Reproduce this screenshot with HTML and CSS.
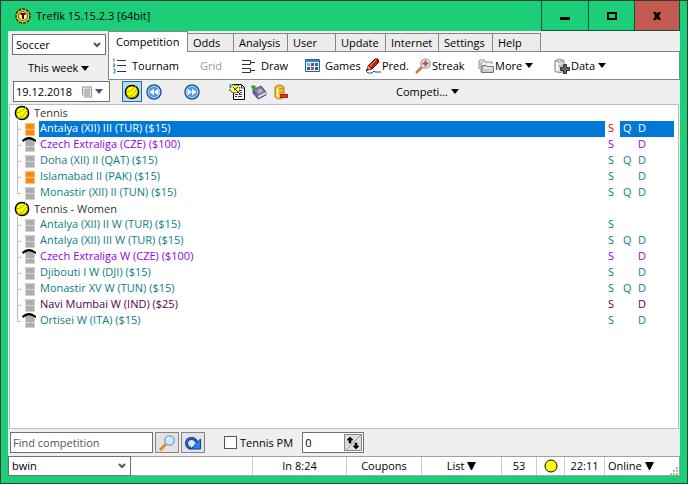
FILE: index.html
```html
<!DOCTYPE html>
<html lang="en">
<head>
<meta charset="utf-8">
<title>Trefík 15.15.2.3 [64bit]</title>
<link rel="stylesheet" href="styles.css">
</head>
<body>
<svg class="sprite" aria-hidden="true">
  <symbol id="ball" viewBox="0 0 16 16"><circle cx="8" cy="8" r="6.600" fill="#ff0" stroke="#000" stroke-width="1.500"/><path d="M2 8Q6 8 8 6T12 2M3 12Q8 13 10 9T14 6" fill="none" stroke="#b5ad00" stroke-width="1"/><path d="M4 13.500Q12 14.500 13.800 8" fill="none" stroke="#8a8200" stroke-width="1"/></symbol>
  <symbol id="court" viewBox="0 0 14 16"><path d="M3 2h10v13H3z" fill="currentColor"/><path d="M3.500 2.500h9v12h-9zM3 8.500h10" fill="none" stroke="#fff" stroke-opacity=".45"/></symbol>
  <symbol id="hall" viewBox="0 0 14 16"><path d="M3 3h10v12H3z" fill="currentColor"/><path d="M3.500 4v10.500h9V4M3 9.500h10" fill="none" stroke="#fff" stroke-opacity=".45"/><path d="M0 3L3 1Q7-1 11 1L14 3V5L10 3Q7 2 4 3L1 5Z" fill="#000"/></symbol>
  <symbol id="down" viewBox="0 0 8 5"><path d="M0 0h8L4 5z" fill="currentColor"/></symbol>
  <symbol id="bigdown" viewBox="0 0 9 8"><path d="M0 0h9L5 8H4z" fill="currentColor"/></symbol>
  <symbol id="chevron" viewBox="0 0 8 6"><path d="M1 1l3 3 3-3" fill="none" stroke="#555" stroke-width="2"/></symbol>
</svg>

<div class="window">
  <header class="titlebar">
    <svg class="icon" viewBox="0 0 16 16"><circle cx="8" cy="8" r="7" fill="#f7ca24" stroke="#332800" stroke-width="1.500" stroke-dasharray="3 1"/><circle cx="8" cy="8" r="4.500" fill="#fff4a8" stroke="#665000"/><path d="M5.500 5h5v2H9v4H7V7H5.500z" fill="#111"/></svg>
    <h1>Trefík 15.15.2.3 [64bit]</h1>
    <div class="caption">
      <button type="button" aria-label="Minimize"><svg class="glyph" viewBox="0 0 10 10"><path d="M0 6h10v3H0z"/></svg></button>
      <button type="button" aria-label="Maximize"><svg class="glyph" viewBox="0 0 10 10"><path d="M1 2h8v6H1z" fill="none" stroke="#000" stroke-width="2"/></svg></button>
      <button type="button" class="close" aria-label="Close"><svg class="glyph" viewBox="0 0 10 10"><path d="M1 1h3l1 2 1-2h3L7 5l2 4H6L5 7 4 9H1l2-4z"/></svg></button>
    </div>
  </header>

  <main class="client">
    <div class="top">
      <div class="filters">
        <div class="combo"><select aria-label="Sport"><option>Soccer</option></select><svg class="chev"><use href="#chevron"/></svg></div>
        <button type="button" class="plain week">This week <svg class="arrow"><use href="#down"/></svg></button>
      </div>
      <div class="ribbon">
        <nav class="tabs">
          <button type="button" class="active">Competition</button>
          <button type="button">Odds</button>
          <button type="button">Analysis</button>
          <button type="button">User</button>
          <button type="button">Update</button>
          <button type="button">Internet</button>
          <button type="button">Settings</button>
          <button type="button">Help</button>
        </nav>
        <div class="actions">
          <button type="button" class="plain wide"><svg class="icon" viewBox="0 0 16 16"><path d="M5 2.500h9M5 7.500h9M5 13.500h9" stroke="#333"/><path d="M1 1h1v3M1 6h2v1L1 8.500h2M1 11h2v1.500H2h1V15H1" fill="none" stroke="#3b83c0"/></svg>Tournam</button>
          <button type="button" class="plain" disabled>Grid</button>
          <button type="button" class="plain wide"><svg class="icon" viewBox="0 0 16 16"><path d="M1 2.500h8.500v4H1M1 10.500h8.500v4H1M9 4.500h5M9 12.500h5" fill="none" stroke="#333"/></svg>Draw</button>
          <button type="button" class="plain wide"><svg class="icon" viewBox="0 0 16 16"><path d="M.5 1.500h14v12H.5z" fill="#f4faff" stroke="#2861a5"/><path d="M1 2h13v2H1z" fill="#3b83d4"/><path d="M2 5h3v3H2zM6 9h3v3H6z" fill="#88a5cc"/><path d="M6 5h3v3H6zM2 9h3v3H2z" fill="#2564b8"/><path d="M10 5h3v3h-3z" fill="#0a9b28"/><path d="M10 9h3v3h-3z" fill="#2d57a0"/><path d="M6 9h3v3H6z" fill="#d44b26"/></svg>Games</button>
          <button type="button" class="plain"><svg class="icon" viewBox="0 0 16 16"><path d="M1 11l1 1-1 1 2 2h4l2-2 1 1h6" fill="none" stroke="#2349a0"/><path d="M2 12L3 8 10 1l3 0 1 3-7 7z" fill="#c62213" stroke="#5a1006"/><path d="M5 8l6-6" stroke="#f79b75"/><path d="M2 12l1-4 3 3z" fill="#e8b070"/><path d="M1.500 12.500l1-2 1.500 1.500z"/></svg>Pred.</button>
          <button type="button" class="plain"><svg class="icon" viewBox="0 0 16 16"><path d="M1 15l6-6" stroke="#c8793a" stroke-width="2.500"/><circle cx="10.500" cy="5.500" r="4.700" fill="#d8efff" stroke="#8fa9c4" stroke-width="1.300"/><path d="M10.500 2.500v6M7.500 5.500h6" stroke="#ef3b17" stroke-width="2"/></svg>Streak</button>
          <button type="button" class="plain"><svg class="icon" viewBox="0 0 16 16"><path d="M1 11V3l1-1h4l1 2h7v2M3 14V6l1-2" fill="#eee" stroke="#888"/><path d="M4.500 7.500h4l1 1h6v6H3.500z" fill="#ccc" stroke="#777"/><path d="M5 10h10" stroke="#fff"/></svg>More <svg class="arrow"><use href="#down"/></svg></button>
          <button type="button" class="plain"><svg class="icon" viewBox="0 0 16 16"><path d="M1 2.500Q5.500-.5 10 2.500v11Q5.500 16 1 13.500z" fill="#ddd" stroke="#888"/><path d="M1 7q4.500 2.500 9 0M1 3q4.500 2 9 0" fill="none" stroke="#999"/><path d="M3 4v9" stroke="#fff" stroke-width="2"/><path d="M9.500 6.500h3v3h3v3h-3v3h-3v-3h-3v-3h3z" fill="#666" stroke="#333"/></svg>Data <svg class="arrow"><use href="#down"/></svg></button>
        </div>
      </div>
    </div>

    <div class="toolbar">
      <div class="date">
        <input type="text" value="19.12.2018" aria-label="Date">
        <button type="button" class="plain" aria-label="Open calendar"><svg class="cal" viewBox="0 0 12 12"><path d="M1 .5h9.500v11H3L.5 9V.5z" fill="#eee" stroke="#8d8589"/><path d="M2 3.500h7M2 5.500h7M2 7.500h7M2 9.500h7M3.500 2v8M5.500 2v8M7.500 2v8" stroke="#aaa"/></svg><svg class="arrow small"><use href="#down"/></svg></button>
      </div>
      <div class="tools">
        <button type="button" class="tool on" aria-label="Tennis"><svg class="icon"><use href="#ball"/></svg></button>
        <button type="button" class="tool" aria-label="Previous"><svg class="icon" viewBox="0 0 16 16"><circle cx="8" cy="8" r="7" fill="#4a9bea" stroke="#17579f" stroke-width="1.500"/><circle cx="8" cy="8" r="5.800" fill="none" stroke="#b8dcfa"/><path d="M8 4.500v7L3.500 8zM12.500 4.500v7L8 8z" fill="#fff"/></svg></button>
        <button type="button" class="tool" aria-label="Next"><svg class="icon" viewBox="0 0 16 16"><circle cx="8" cy="8" r="7" fill="#4a9bea" stroke="#17579f" stroke-width="1.500"/><circle cx="8" cy="8" r="5.800" fill="none" stroke="#b8dcfa"/><path d="M8 4.500v7L12.500 8zM3.500 4.500v7L8 8z" fill="#fff"/></svg></button>
        <button type="button" class="tool" aria-label="Notes"><svg class="icon" viewBox="0 0 16 16"><path d="M4.500.5h8l3 3v12h-11z" fill="#fff" stroke="#000"/><path d="M12.500 1v3h3M6 10.500h3m1 0h3M6 12.500h2m1 0h4M11 6.500h2M11 8.500h2" fill="none" stroke="#333"/><path d="M0 0h4v3H0z" fill="#2be0e8"/><path d="M1 4l2-3h6l2 3-1 4-5 1-4-2z" fill="#ff6" stroke="#333" stroke-dasharray="2 1"/><path d="M4 3l7 7M5 6l4-3" stroke="#333"/></svg></button>
        <button type="button" class="tool" aria-label="Book"><svg class="icon" viewBox="0 0 16 16"><path d="M2 6l8-4 5 6v3l-8 4-5-6z" fill="#625f9f" stroke="#50507c"/><path d="M7 12l8-4v2l-8 4z" fill="#e8e8f2"/><path d="M3 6l7-3 4 5-7 3z" fill="#8583c2"/><path d="M9 5v4M7 7h4" stroke="#eddc59"/><path d="M0 2l3-1 1 1 2 1-2 1-1 2-2-1z" fill="#3d9b35"/></svg></button>
        <button type="button" class="tool" aria-label="Remove data"><svg class="icon" viewBox="0 0 16 16"><path d="M2 3Q6.500-1 11 3v10q-4.500 4-9 0z" fill="#f1c32c" stroke="#b77a12"/><path d="M2 8q4.500 2 9 0M2 4q4.500 2 9 0" fill="none" stroke="#c38c18"/><path d="M4.500 4v9" stroke="#fff29b" stroke-width="2"/><path d="M7.500 10.500h7v3h-7z" fill="#f32d1c" stroke="#a51b10"/></svg></button>
        <button type="button" class="plain">Competi… <svg class="arrow"><use href="#down"/></svg></button>
      </div>
    </div>

    <section class="tree" aria-label="Competitions">
      <h2><svg class="icon"><use href="#ball"/></svg>Tennis</h2>
      <ul>
        <li class="orange selected"><svg class="court"><use href="#court"/></svg><span class="name">Antalya (XII) III (TUR) ($15)</span><span class="flag s">S</span><span class="flag">Q</span><span class="flag">D</span></li>
        <li class="purple"><svg class="court"><use href="#hall"/></svg><span class="name">Czech Extraliga (CZE) ($100)</span><span class="flag s">S</span><span class="flag"></span><span class="flag">D</span></li>
        <li><svg class="court"><use href="#court"/></svg><span class="name">Doha (XII) II (QAT) ($15)</span><span class="flag s">S</span><span class="flag">Q</span><span class="flag">D</span></li>
        <li class="orange"><svg class="court"><use href="#court"/></svg><span class="name">Islamabad II (PAK) ($15)</span><span class="flag s">S</span><span class="flag"></span><span class="flag">D</span></li>
        <li><svg class="court"><use href="#court"/></svg><span class="name">Monastir (XII) II (TUN) ($15)</span><span class="flag s">S</span><span class="flag">Q</span><span class="flag">D</span></li>
      </ul>
      <h2><svg class="icon"><use href="#ball"/></svg>Tennis - Women</h2>
      <ul>
        <li><svg class="court"><use href="#court"/></svg><span class="name">Antalya (XII) II W (TUR) ($15)</span><span class="flag s">S</span><span class="flag"></span><span class="flag"></span></li>
        <li><svg class="court"><use href="#court"/></svg><span class="name">Antalya (XII) III W (TUR) ($15)</span><span class="flag s">S</span><span class="flag">Q</span><span class="flag">D</span></li>
        <li class="purple"><svg class="court"><use href="#hall"/></svg><span class="name">Czech Extraliga W (CZE) ($100)</span><span class="flag s">S</span><span class="flag"></span><span class="flag">D</span></li>
        <li><svg class="court"><use href="#court"/></svg><span class="name">Djibouti I W (DJI) ($15)</span><span class="flag s">S</span><span class="flag"></span><span class="flag">D</span></li>
        <li><svg class="court"><use href="#court"/></svg><span class="name">Monastir XV W (TUN) ($15)</span><span class="flag s">S</span><span class="flag">Q</span><span class="flag">D</span></li>
        <li class="plum"><svg class="court"><use href="#court"/></svg><span class="name">Navi Mumbai W (IND) ($25)</span><span class="flag s">S</span><span class="flag"></span><span class="flag">D</span></li>
        <li><svg class="court"><use href="#hall"/></svg><span class="name">Ortisei W (ITA) ($15)</span><span class="flag s">S</span><span class="flag"></span><span class="flag">D</span></li>
      </ul>
    </section>

    <div class="search">
      <input type="text" class="find" placeholder="Find competition" aria-label="Find competition">
      <button type="button" class="push" aria-label="Search"><svg class="icon" viewBox="0 0 16 16"><path d="M1 15l6-6" stroke="#d98a2b" stroke-width="3"/><circle cx="10.500" cy="5.500" r="4.700" fill="#c4ecff" stroke="#8aa3bd" stroke-width="1.500"/><path d="M8 5q0-2 2-2.500" fill="none" stroke="#fff" stroke-width="1.500"/></svg></button>
      <button type="button" class="push" aria-label="Refresh"><svg class="icon" viewBox="0 0 16 16"><path d="M6 13.500Q1.500 12 1.500 8Q2 3.500 6.500 3.500Q10.500 3.500 12 8" fill="none" stroke="#0b409c" stroke-width="3"/><path d="M15.500 4v10H6z" fill="#2f7de0" stroke="#0b409c"/><path d="M5.500 13Q1.500 12 1.500 8Q2 3.500 6.500 3.500Q10.500 3.500 12 9" fill="none" stroke="#2f7de0"/></svg></button>
      <label class="check"><input type="checkbox">Tennis PM</label>
      <div class="spin"><input type="text" value="0" aria-label="Count"><button type="button" aria-label="Change count"><svg class="icon" viewBox="0 0 16 16"><path d="M0 16L16 0" stroke="#999"/><path d="M5 2L2 5h2v3h2V5h2zM11 14l3-3h-2V8h-2v3H8z" stroke="#000" stroke-width=".7"/></svg></button></div>
    </div>

    <footer class="status">
      <div class="combo"><select aria-label="Bookmaker"><option>bwin</option></select><svg class="chev"><use href="#chevron"/></svg></div>
      <span></span>
      <span>In 8:24</span>
      <span>Coupons</span>
      <button type="button" class="plain">List <svg class="arrow tall"><use href="#bigdown"/></svg></button>
      <span>53</span>
      <span><svg class="dot" viewBox="0 0 14 14"><circle cx="7" cy="7" r="6" fill="#ff0" stroke="#000"/></svg></span>
      <span>22:11</span>
      <button type="button" class="plain online">Online <svg class="arrow tall"><use href="#bigdown"/></svg></button>
      <svg class="grip" viewBox="0 0 8 8"><path d="M6 0h2v2H6zM6 3h2v2H6zM6 6h2v2H6zM3 3h2v2H3zM3 6h2v2H3zM0 6h2v2H0z" fill="#bbb"/></svg>
    </footer>
  </main>
</div>
</body>
</html>
```
FILE: styles.css
```css
* { box-sizing: border-box; }

body {
  margin: 0;
  font: 11px/16px "Open Sans", "Noto Sans", sans-serif;
  color: #000;
}

button, input, select {
  font: inherit;
  color: inherit;
  margin: 0;
  padding: 0;
  border: 0;
  border-radius: 0;
  background: none;
  min-width: 0;
}

svg { flex: none; display: block; }
.sprite { position: absolute; width: 0; height: 0; }
.icon { width: 16px; height: 16px; }
.arrow { width: 8px; height: 5px; }
.arrow.small { color: #3d5a7d; }
.arrow.tall { width: 9px; height: 8px; }

.window {
  height: 100vh;
  display: flex;
  flex-direction: column;
  background: #1bce77;
  border: 1px solid #303b35;
  padding: 0 7px 7px;
}

.titlebar {
  flex: none;
  height: 30px;
  display: flex;
  align-items: center;
  gap: 5px;
  padding-left: 7px;
}
.titlebar h1 { flex: 1; margin: 0; font-size: 11px; font-weight: 400; }
.caption {
  align-self: stretch;
  display: grid;
  grid-template-columns: 47px 46px 46px;
}
.caption button {
  display: grid;
  place-items: center;
  border-left: 1px solid #17503a;
  border-bottom: 1px solid #17503a;
}
.caption .close { background: #c4594f; border-right: 1px solid #17503a; }
.glyph { width: 10px; height: 10px; }

.client {
  flex: 1;
  min-height: 0;
  display: flex;
  flex-direction: column;
  background: #efefef;
}

.plain { display: flex; align-items: center; gap: 3px; white-space: nowrap; }
.plain:disabled { color: #999; }

.combo { display: grid; align-items: center; background: #fff; border: 1px solid #707070; }
.combo select { grid-area: 1 / 1; width: 100%; height: 100%; appearance: none; padding-left: 3px; }
.combo .chev { grid-area: 1 / 1; justify-self: end; width: 8px; height: 6px; margin-right: 4px; pointer-events: none; }

.top { flex: none; display: grid; grid-template-columns: 100px 1fr; }
.filters { padding: 3px 2px 0 4px; }
.filters .combo { height: 21px; }
.week { margin: 5px 0 0 16px; }

.tabs {
  display: grid;
  grid-template-columns: 80px 46px 54px 48px 50px 53px 54px 48px;
  align-items: end;
  height: 21px;
}
.tabs button {
  height: 19px;
  padding-left: 5px;
  text-align: left;
  white-space: nowrap;
  border: 1px solid #85858f;
  border-width: 1px 1px 1px 0;
  background: #ececec;
}
.tabs .active {
  height: 21px;
  padding-left: 7px;
  border-width: 1px 1px 0;
  background: #fff;
  z-index: 1;
}
.actions {
  display: grid;
  grid-template-columns: 88px 41px 64px 60px 50px 63px 76px 1fr;
  height: 29px;
  margin-top: -1px;
  padding-left: 3px;
  background: #fff;
  border: 1px solid #85858f;
}
.actions .plain { gap: 1px; }
.actions .arrow { margin-left: 2px; }
.actions .wide { gap: 4px; }

.toolbar { flex: none; display: flex; height: 24px; padding: 1px 0 2px 5px; gap: 12px; }
.date { display: flex; width: 97px; background: #fff; border: 1px solid #707070; }
.date input { flex: 1; padding-left: 2px; }
.date .plain { padding-right: 6px; gap: 2px; }
.cal { width: 11px; height: 12px; }
.tools { display: grid; grid-template-columns: 22px 38px 45px 22px 22px 125px auto; }
.tool { justify-self: start; width: 20px; display: grid; place-items: center; border: 1px solid transparent; }
.tool.on { background: #bcdcf4; border-color: #1d6dab; }

.tree {
  flex: 1;
  min-height: 0;
  overflow: hidden;
  margin: 0 1px;
  background: #fff;
  border: 1px solid #bcbcbc;
  color: #333;
}
.tree h2 {
  display: flex;
  align-items: center;
  gap: 4px;
  height: 16px;
  margin: 0;
  padding-left: 4px;
  font-size: 11px;
  font-weight: 400;
}
.tree ul {
  list-style: none;
  margin: 0 4px 0 7px;
  padding: 0;
  background: linear-gradient(#bbb, #bbb) 0 0 / 1px calc(100% - 8px) no-repeat;
}
.tree li {
  display: grid;
  grid-template-columns: 22px 1fr 15px 15px 39px;
  height: 16px;
  padding-bottom: 2px;
  color: #088080;
  line-height: 14px;
  background: linear-gradient(#bbb, #bbb) 0 8px / 4px 1px no-repeat;
}
.tree .court { width: 14px; height: 16px; margin-left: 5px; color: #adadad; }
.tree .name { padding-left: 1px; white-space: nowrap; }
.tree .flag { padding-left: 3px; }
.tree .orange .court { color: #f98b12; }
.tree .purple { color: #9000f0; }
.tree .plum { color: #50004b; }
.tree .selected span { background: #0078d7; color: #fff; }
.tree .selected .s { background: #fff; color: #e80010; }

.search { flex: none; display: flex; align-items: center; height: 27px; padding-left: 2px; }
.search > * { height: 21px; }
.find { width: 143px; padding-left: 2px; background: #fff; border: 1px solid #707070; }
.find::placeholder { color: #555; opacity: 1; }
.push {
  display: grid;
  place-items: center;
  width: 24px;
  margin-left: 2px;
  background: #e3e3e3;
  border: 1px solid #858585;
}
.check { display: flex; align-items: center; gap: 3px; margin-left: 19px; white-space: nowrap; }
.check input { width: 13px; height: 13px; appearance: none; background: #fff; border: 1px solid #555; }
.spin { display: flex; width: 62px; margin-left: 9px; background: #fff; border: 1px solid #707070; }
.spin input { flex: 1; padding-left: 2px; }
.spin button { width: 18px; margin: 1px; display: grid; place-items: center; background: #ddd; border: 1px solid #888; }

.status {
  flex: none;
  display: grid;
  grid-template-columns: 123px 1fr 94px 75px 80px 35px 28px 40px 66px 9px;
  height: 20px;
  background: #fff;
  border: 1px solid #a0a0a0;
  border-left: 0;
}
.status .combo { margin: -1px 0; }
.status > span, .status > .plain { display: flex; align-items: center; justify-content: center; border-left: 1px solid #ccc; }
.status > span:nth-child(2) { border: 0; }
.status > .online { justify-content: flex-start; padding-left: 3px; }
.grip { width: 8px; height: 8px; align-self: end; }
.dot { width: 14px; height: 14px; }
```
